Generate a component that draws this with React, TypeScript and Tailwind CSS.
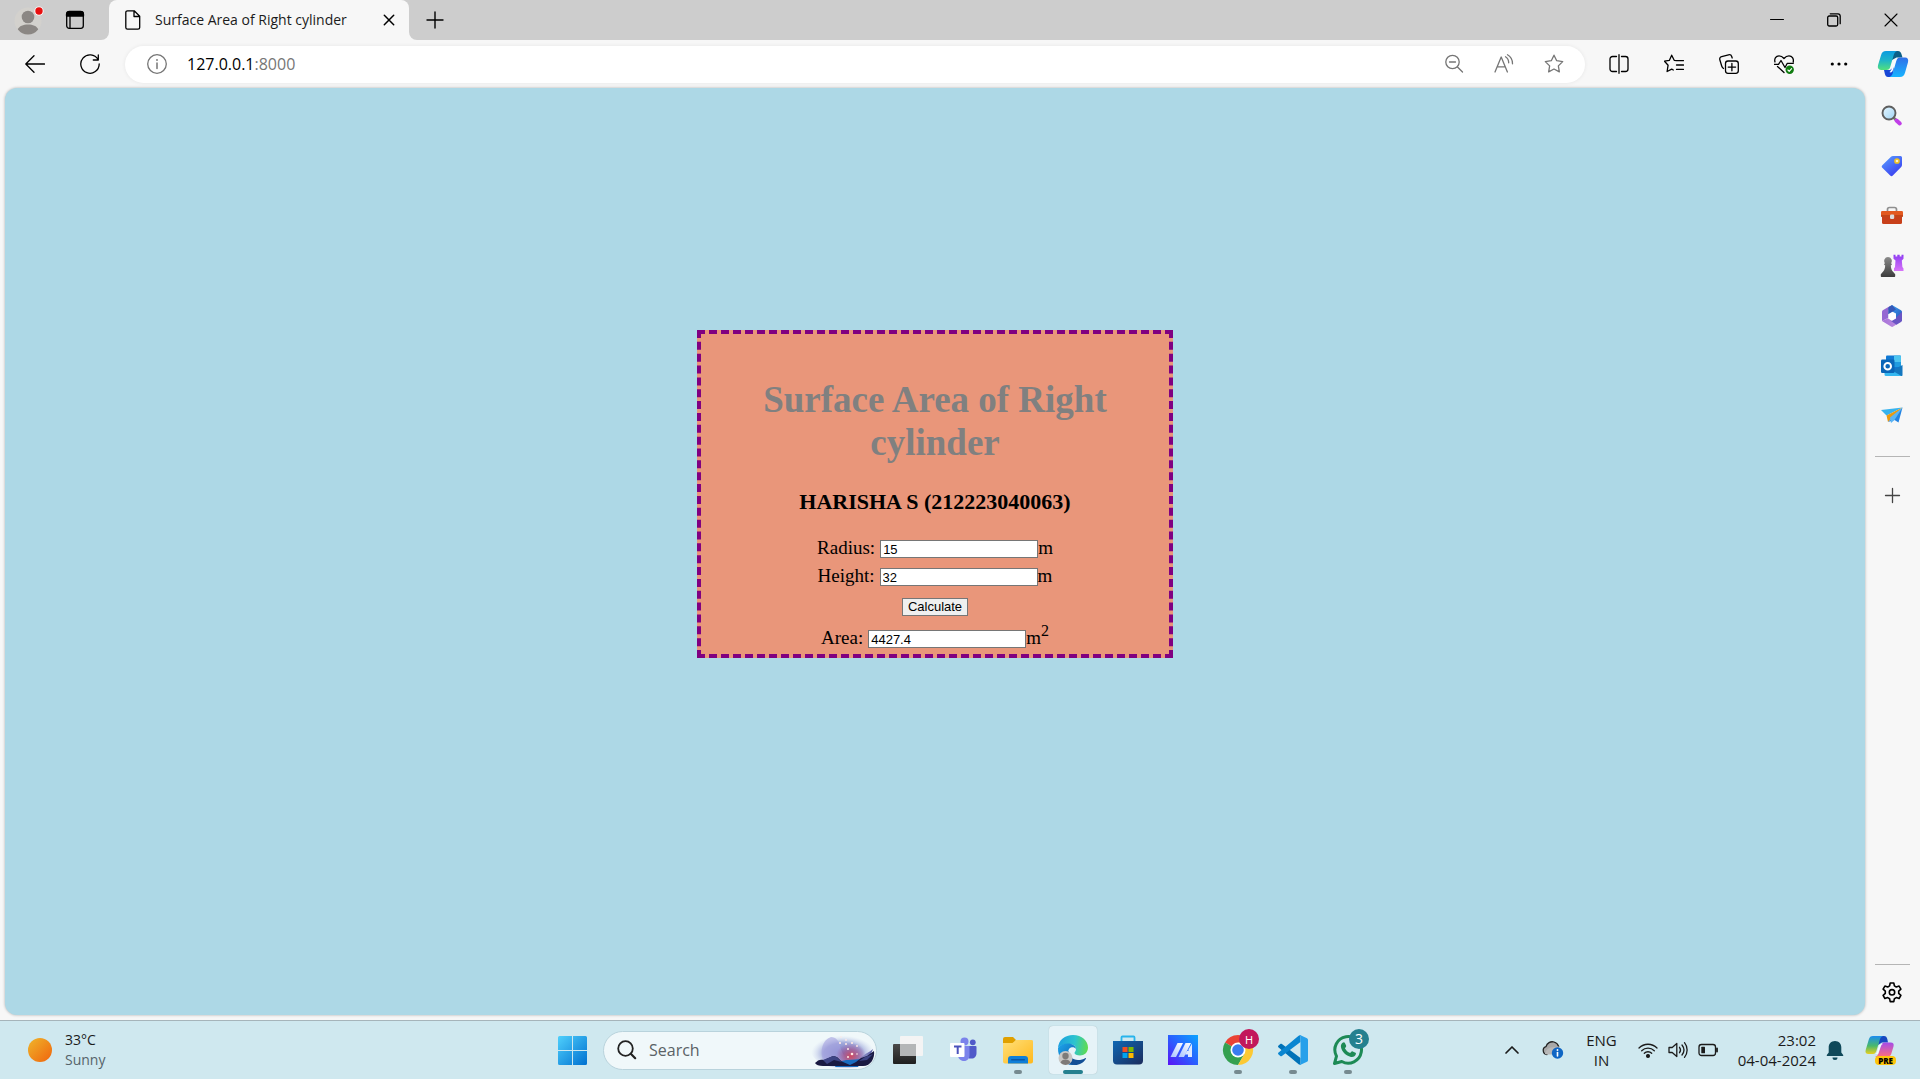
import React, { useState } from "react";

type IconProps = { children: React.ReactNode; size?: number; className?: string; box?: string };

function Svg({ children, size = 20, className = "", box }: IconProps) {
  return (
    <svg
      width={size}
      height={size}
      viewBox={box ?? `0 0 ${size} ${size}`}
      fill="none"
      stroke="currentColor"
      strokeWidth={1.3}
      strokeLinecap="round"
      strokeLinejoin="round"
      className={className}
      aria-hidden="true"
    >
      {children}
    </svg>
  );
}

function IconButton({ label, className = "", children }: { label: string; className?: string; children: React.ReactNode }) {
  return (
    <button type="button" aria-label={label} className={`flex shrink-0 items-center justify-center ${className}`}>
      {children}
    </button>
  );
}

function ProfileIcon() {
  return (
    <Svg size={34}>
      <g stroke="none">
        <circle cx="16" cy="18" r="13.5" fill="#d3d1cd" />
        <circle cx="16" cy="14" r="6.3" fill="#8b8784" />
        <path d="M5.8 26.5c1.400-3.600 5.400-5 10.200-5s8.800 1.400 10.200 5A13.500 13.500 0 0 1 16 31.500 13.500 13.500 0 0 1 5.800 26.500z" fill="#8b8784" />
        <circle cx="27" cy="8" r="4.600" fill="#fff" />
        <circle cx="27" cy="8" r="3.700" fill="#e81010" />
      </g>
    </Svg>
  );
}

function TitleBar() {
  return (
    <header className="flex h-10 bg-[#f7f7f7]">
      <div className="flex w-[109px] items-center rounded-br-lg bg-[#cdcdcd] pl-3">
        <IconButton label="Profile">
          <ProfileIcon />
        </IconButton>
        <IconButton label="Tab actions" className="ml-[19px]">
          <Svg size={20}>
            <rect x="1.700" y="1.700" width="16.600" height="16.600" rx="2.500" />
            <path d="M1.500 6V4.200A3 3 0 0 1 4.500 1.500h11a3 3 0 0 1 3 2.700V6z" fill="#000" />
            <path d="M5 6v12" />
          </Svg>
        </IconButton>
      </div>
      <div className="w-[300px] bg-[linear-gradient(#cdcdcd_50%,#f7f7f7_50%)]">
        <div className="flex h-10 items-center rounded-t-lg bg-[#f7f7f7] pl-[14px] pr-3">
          <Svg size={20}>
            <path d="M4.500.8h6.700l5.500 5.500v11.200a1.700 1.700 0 0 1-1.700 1.700H4.500a1.700 1.700 0 0 1-1.700-1.700v-15A1.700 1.700 0 0 1 4.500.8zM11 1v5.500h5.500" />
          </Svg>
          <span className="ml-3 flex-1 text-sm whitespace-nowrap text-[#1b1b1b]">Surface Area of Right cylinder</span>
          <IconButton label="Close tab">
            <Svg size={16}>
              <path d="M3.300 3.300l9.400 9.400M12.700 3.300l-9.400 9.400" strokeWidth={1.500} />
            </Svg>
          </IconButton>
        </div>
      </div>
      <div className="flex flex-1 items-center justify-between rounded-bl-lg bg-[#cdcdcd] pl-4">
        <IconButton label="New tab">
          <Svg size={20}>
            <path d="M10 2v16M2 10h16" strokeWidth={1.400} />
          </Svg>
        </IconButton>
        <div className="flex">
          <IconButton label="Minimize" className="w-[57px]">
            <Svg size={14}>
              <path d="M.5 6.500h13" strokeWidth={1} />
            </Svg>
          </IconButton>
          <IconButton label="Restore" className="w-[57px]">
            <Svg size={14}>
              <rect x=".7" y="3" width="10" height="10" rx="1.500" />
              <path d="M3.300.8H11A2.300 2.300 0 0 1 13.200 3v7.700" />
            </Svg>
          </IconButton>
          <IconButton label="Close window" className="w-[58px]">
            <Svg size={14}>
              <path d="M1 1l12 12M13 1L1 13" strokeWidth={1.100} />
            </Svg>
          </IconButton>
        </div>
      </div>
    </header>
  );
}

const STAR = "M10 1.200l2.700 5.500 6 .9-4.350 4.250 1 6L10 15l-5.350 2.850 1-6L1.300 7.600l6-.9z";

function CopilotIcon() {
  return (
    <Svg size={32}>
      <defs>
        <linearGradient id="cpA" x1="0" y1="0" x2="0" y2="1">
          <stop offset="0" stopColor="#0a9be0" />
          <stop offset=".5" stopColor="#1fb5c8" />
          <stop offset="1" stopColor="#52e07c" />
        </linearGradient>
        <linearGradient id="cpB" x1="0" y1="0" x2="0" y2="1">
          <stop offset="0" stopColor="#2f6fe8" />
          <stop offset="1" stopColor="#18b4ff" />
        </linearGradient>
      </defs>
      <g stroke="none">
        <path d="M15 3h6c2 0 3 1.200 3.600 3.500L25.500 9.500h-6L15 12z" fill="#0b5f88" />
        <path d="M16 29h-5c-1.600 0-2.600-1-3.100-3L7 22h6l4-3z" fill="#1746d6" />
        <path d="M9 3h11c-2 .7-2.800 2.300-3.500 4.700l-3.200 11c-.6 2.200-1.600 3.300-3.800 3.300H4c-2.600 0-3.700-2-3-4.700l3-10C4.900 4.300 6.300 3 9 3z" fill="url(#cpA)" />
        <path d="M23 29H12.500c2-.7 2.800-2.300 3.500-4.700l3.200-11c.6-2.200 1.600-3.800 3.800-3.800h5c2.600 0 3.700 2 3 4.700l-3 10.500C27.100 27.700 25.700 29 23 29z" fill="url(#cpB)" />
        <path d="M19.800 11.500c-1 1-1.500 2.500-2 4.500l-1.700 5.700c-.5 1.700-1.300 2.500-2.600 2.900l-1-.6c1.300-.7 1.900-2.300 2.400-4l1.500-5c.5-1.900 1.500-3.200 3.400-3.500z" fill="#f4fbff" />
      </g>
    </Svg>
  );
}

function Toolbar() {
  return (
    <nav aria-label="Browser toolbar" className="flex h-12 items-center pr-[11px] text-black">
      <IconButton label="Back" className="ml-[25px]">
        <Svg size={20}>
          <path d="M19.500 10H1M9 1.800L.8 10 9 18.200" />
        </Svg>
      </IconButton>
      <IconButton label="Reload" className="mr-[25px] ml-[35px]">
        <Svg size={20}>
          <path d="M18 5.500A9.200 9.200 0 1 0 19.200 10M18.300 1v5h-5" />
        </Svg>
      </IconButton>
      <div className="flex h-[37px] flex-1 items-center rounded-full bg-white pr-[21px] pl-[22px] text-[#757575] shadow-[0_0_4px_rgba(0,0,0,0.07)]">
        <IconButton label="Site information">
          <Svg size={20}>
            <circle cx="10" cy="10" r="9.300" />
            <path d="M10 9v5.500" strokeWidth={1.500} />
            <path d="M10 5.900v.2" strokeWidth={1.800} />
          </Svg>
        </IconButton>
        <a href="http://127.0.0.1:8000" className="ml-5 flex-1 text-base text-[#767676]">
          <span className="text-black">127.0.0.1</span>:8000
        </a>
        <IconButton label="Zoom out">
          <Svg size={20}>
            <circle cx="8.500" cy="8" r="6.700" />
            <path d="M13.500 13l5 5M5.500 8h6" />
          </Svg>
        </IconButton>
        <IconButton label="Read aloud" className="mx-[30px]">
          <Svg size={20}>
            <path d="M1 18L7.200 3l6.200 15M3.300 12.800h7.800M11.500 2.800c2 1.200 3.200 3.200 3.200 6M13.500.8c3.300 1.800 5 4.800 5 9" />
          </Svg>
        </IconButton>
        <IconButton label="Add to favorites">
          <Svg size={20}>
            <path d={STAR} />
          </Svg>
        </IconButton>
      </div>
      <div className="ml-6 flex items-center gap-[35px]">
        <IconButton label="Split screen">
          <Svg size={20}>
            <path d="M7.500 2.500h-4A2.500 2.500 0 0 0 1 5v10a2.500 2.500 0 0 0 2.500 2.500h4M12.500 2.500h4A2.500 2.500 0 0 1 19 5v10a2.500 2.500 0 0 1-2.500 2.500h-4M10 .7v18.600" />
          </Svg>
        </IconButton>
        <IconButton label="Favorites">
          <Svg size={20}>
            <path d="M12.500 6.600l-2.300-.3L7.700 1.200 5.300 6.400l-4.800.8 3.600 4-1 6.300 4.600-2.400 1.600.9M12.500 6.600h7M12.500 11h7M12.500 15.400h7" />
          </Svg>
        </IconButton>
        <IconButton label="Collections">
          <Svg size={20}>
            <rect x="6.500" y="7" width="12.800" height="12.300" rx="2.500" />
            <path d="M12.900 9.500v7.300M9.200 13.100h7.400M4.500 14.500C3.500 13.800 3 13 2.700 12L.9 6c-.5-1.700.2-3 1.800-3.400l6.800-1.800c1.600-.4 2.700.1 3.200 1.700l.5 1.500" />
          </Svg>
        </IconButton>
        <IconButton label="Browser essentials">
          <Svg size={20}>
            <path d="M1 8C0 4.500 2 1.800 5 1.800c2 0 3.600 1 5 2.700 1.400-1.700 3-2.700 5-2.700 3 0 5 2.700 4.200 6.200M.5 10.300h4L7 6.500l4 7 2.300-4.200h6M3.500 12.500l6.500 6" />
            <circle cx="15.700" cy="15.800" r="4.200" fill="#107c10" stroke="none" />
            <path d="M13.900 16l1.300 1.300 2.400-2.700" stroke="#fff" strokeWidth={1.100} />
          </Svg>
        </IconButton>
        <IconButton label="Settings and more">
          <Svg size={20}>
            <g fill="#000" stroke="none">
              <circle cx="3.300" cy="10" r="1.600" />
              <circle cx="10" cy="10" r="1.600" />
              <circle cx="16.700" cy="10" r="1.600" />
            </g>
          </Svg>
        </IconButton>
      </div>
      <IconButton label="Copilot" className="ml-7">
        <CopilotIcon />
      </IconButton>
    </nav>
  );
}

function NumberRow({ id, label, unit, value, onChange, readOnly }: { id: string; label: string; unit: React.ReactNode; value: string; onChange?: (v: string) => void; readOnly?: boolean }) {
  return (
    <div className="flex h-7 items-center justify-center text-[19px]">
      <label htmlFor={id} className="mr-[5px]">
        {label}
      </label>
      <input
        id={id}
        type="text"
        value={value}
        readOnly={readOnly}
        onChange={(e) => onChange?.(e.target.value)}
        className="mt-0.5 h-[18px] w-[158px] border border-[#767676] bg-white px-[2px] font-['Liberation_Sans',sans-serif] text-[13px] leading-4"
      />
      <span>{unit}</span>
    </div>
  );
}

function CylinderForm() {
  const [radius, setRadius] = useState("15");
  const [height, setHeight] = useState("32");
  const [area, setArea] = useState("4427.4");
  const calculate = () => {
    const r = Number(radius);
    const h = Number(height);
    setArea((2 * Math.PI * r * h + 2 * Math.PI * r * r).toFixed(1));
  };
  return (
    <form
      onSubmit={(e) => {
        e.preventDefault();
        calculate();
      }}
      className="w-[476px] border-4 border-dashed border-[purple] bg-[darksalmon] px-8 pt-11 pb-[2px] text-center font-['Liberation_Serif',serif] text-black"
    >
      <h1 className="text-[37px] leading-[43px] font-bold text-[gray]">Surface Area of Right cylinder</h1>
      <h3 className="mt-[25px] mb-5 text-[22px] leading-[25px] font-bold">HARISHA S (212223040063)</h3>
      <NumberRow id="radius" label="Radius:" unit="m" value={radius} onChange={setRadius} />
      <NumberRow id="height" label="Height:" unit="m" value={height} onChange={setHeight} />
      <div className="flex justify-center py-2">
        <button type="submit" className="h-[18px] border border-[#767676] bg-[#efefef] px-[5px] font-['Liberation_Sans',sans-serif] text-[13px] leading-4">
          Calculate
        </button>
      </div>
      <NumberRow
        id="area"
        label="Area:"
        unit={
          <>
            m<sup className="text-base">2</sup>
          </>
        }
        value={area}
        readOnly
      />
    </form>
  );
}

function SearchGlass() {
  return (
    <Svg size={24}>
      <defs>
        <linearGradient id="lens" x1="0" y1="0" x2="1" y2="1">
          <stop offset="0" stopColor="#e6f6ff" />
          <stop offset="1" stopColor="#9fd4f4" />
        </linearGradient>
      </defs>
      <path d="M13 13l3 3" stroke="#777" strokeWidth={2.500} />
      <path d="M16.500 16.500l3.300 3" stroke="#c13ee8" strokeWidth={4} />
      <circle cx="9" cy="9" r="6.500" fill="url(#lens)" stroke="#5e5e5e" strokeWidth={1.900} />
    </Svg>
  );
}

function TagIcon() {
  return (
    <Svg size={24}>
      <defs>
        <linearGradient id="tag" x1="0" y1="0" x2=".7" y2="1">
          <stop offset="0" stopColor="#5aa2ff" />
          <stop offset="1" stopColor="#3a3df0" />
        </linearGradient>
      </defs>
      <path d="M13 2h7.500A1.500 1.500 0 0 1 22 3.500V11c0 .8-.3 1.500-.8 2l-8.400 8.600c-.8.8-1.800.8-2.600 0L2.300 13.800c-.8-.8-.8-1.800 0-2.600L11 2.800c.5-.5 1.200-.8 2-.8z" fill="url(#tag)" stroke="none" />
      <circle cx="17" cy="7" r="2.100" fill="#fff2c8" stroke="#f2c21d" strokeWidth={1.500} />
    </Svg>
  );
}

function ToolboxIcon() {
  return (
    <Svg size={24}>
      <path d="M7.500 7V5.500A2 2 0 0 1 9.500 3.500h5a2 2 0 0 1 2 2V7" stroke="#8f8f8f" strokeWidth={1.700} />
      <g stroke="none">
        <path d="M2 10h20v8.500a1.500 1.500 0 0 1-1.500 1.500h-17A1.500 1.500 0 0 1 2 18.500z" fill="#c8401a" />
        <rect x="1" y="7" width="22" height="6" rx="1.200" fill="#e3591f" />
        <path d="M1 11.500h22v1H1z" fill="#a33312" />
        <rect x="10" y="10.500" width="4.200" height="4.500" rx="1.200" fill="#ddd" />
      </g>
    </Svg>
  );
}

function ChessIcon() {
  return (
    <Svg size={24}>
      <defs>
        <linearGradient id="rook" x1="0" y1="0" x2="0" y2="1">
          <stop offset="0" stopColor="#8f3df2" />
          <stop offset="1" stopColor="#d874f8" />
        </linearGradient>
        <linearGradient id="pawn" x1="0" y1="0" x2="0" y2="1">
          <stop offset="0" stopColor="#8b8b8b" />
          <stop offset="1" stopColor="#3c3c3c" />
        </linearGradient>
      </defs>
      <g stroke="none">
        <path d="M13.500.8h2v1.700h1.800V.8h2.400v1.700h1.800V.8H23.500v4l-1.700 1.700.6 6.500 1.100 1.500V17H14V14.500l1-1.500.5-6.500-2-1.700z" fill="url(#rook)" />
        <path d="M8 3a4 4 0 0 1 3.200 6.300l.8 1.200-1.200.9c.2 3.200 1 5.200 2.700 6.900l1.700 1.900V22c0 .6-.4 1-1 1H1.800c-.6 0-1-.4-1-1v-1.800l1.700-1.900c1.700-1.700 2.500-3.700 2.700-6.900L4 10.500l.8-1.200A4 4 0 0 1 8 3z" fill="url(#pawn)" />
      </g>
    </Svg>
  );
}

function OfficeIcon() {
  return (
    <Svg size={24}>
      <defs>
        <linearGradient id="m365a" x1="0" y1="0" x2="1" y2="1">
          <stop offset="0" stopColor="#3aa8f0" />
          <stop offset="1" stopColor="#2a55c0" />
        </linearGradient>
        <linearGradient id="m365b" x1="0" y1="0" x2="1" y2="0">
          <stop offset="0" stopColor="#a873d8" />
          <stop offset="1" stopColor="#b98ae0" />
        </linearGradient>
      </defs>
      <g stroke="none">
        <path d="M12 1l9 5.200c.6.300 1 .9 1 1.600V17l-6-3.300V9.500L8.200 5.500z" fill="url(#m365a)" />
        <path d="M10.500 1.800L2.800 6.200C2.200 6.600 2 7.100 2 7.800V17l6.200-3V5.500z" fill="#9467d2" />
        <path d="M12 1L9.500 2.400C8.600 3 8.200 3.800 8.200 5v9l3.800-2V8l4-2.500z" fill="#3558b8" />
        <path d="M2 17l9 5.600c.8.500 1.500.5 2.200 0L17 20.200l-8.800-6.200z" fill="url(#m365b)" />
        <path d="M22 7.800v8.400c0 .7-.3 1.400-1 1.800l-4.500 2.700L11 17l5-3.200z" fill="#6a55c4" />
        <path d="M12 8l4 2.300v4.200l-4 2.300-3.800-2.300v-4.200z" fill="#fff" />
      </g>
    </Svg>
  );
}

function OutlookIcon() {
  return (
    <Svg size={24}>
      <g stroke="none">
        <rect x="6" y="1.500" width="15" height="15" rx="1" fill="#0f78d4" />
        <path d="M14 1.500h6a1 1 0 0 1 1 1V8h-7z" fill="#4cc4ef" />
        <path d="M14 8h7v5h-7z" fill="#209be0" />
        <path d="M4.500 12L22 21V22H6a1.500 1.500 0 0 1-1.500-1.500z" fill="#35b8f1" />
        <path d="M22.500 11v10c0 .6-.4 1-1 1L12 16.500z" fill="#1477bf" />
        <rect x="1" y="5.500" width="13.500" height="13.500" rx="1.300" fill="#0a66b8" />
      </g>
      <circle cx="7.700" cy="12.200" r="3.300" stroke="#fff" strokeWidth={2} />
    </Svg>
  );
}

function DropIcon() {
  return (
    <Svg size={24}>
      <g stroke="none">
        <path d="M1 6l21.500-2.500L6.500 11.500z" fill="#37b3ee" />
        <path d="M6.500 11.500L22.500 3.500 8 18z" fill="#e99a12" />
        <path d="M8 18L22.500 3.500 18.500 18.500l-4-2.500z" fill="#2383e2" />
        <path d="M10 13.500L22.500 3.500l-8 12.500-3.500 3z" fill="#5ab5f5" />
      </g>
    </Svg>
  );
}

const SIDEBAR_APPS = [
  { name: "Search", icon: <SearchGlass /> },
  { name: "Shopping", icon: <TagIcon /> },
  { name: "Tools", icon: <ToolboxIcon /> },
  { name: "Games", icon: <ChessIcon /> },
  { name: "Microsoft 365", icon: <OfficeIcon /> },
  { name: "Outlook", icon: <OutlookIcon /> },
  { name: "Drop", icon: <DropIcon /> },
];

function Sidebar() {
  return (
    <aside className="flex w-[55px] flex-col items-center pr-px">
      <div className="flex flex-col gap-[26px] pt-4">
        {SIDEBAR_APPS.map((app) => (
          <IconButton key={app.name} label={app.name}>
            {app.icon}
          </IconButton>
        ))}
      </div>
      <hr className="mt-7 w-[35px] border-[#b5b5b5]" />
      <IconButton label="Customize" className="mt-[30px]">
        <Svg size={17}>
          <path d="M8.500 1.500v14M1.500 8.500h14" stroke="#444" />
        </Svg>
      </IconButton>
      <hr className="mt-auto w-[35px] border-[#b5b5b5]" />
      <IconButton label="Settings" className="mt-[17px] mb-[11px]">
        <Svg size={22}>
          <path
            d="M9.200 1h3.600l.6 2.900 1.900 1.100 2.800-.9 1.800 3.100-2.200 2v2.200l2.200 2-1.800 3.100-2.800-.9-1.900 1.100-.6 2.900H9.200l-.6-2.900-1.900-1.100-2.800.9-1.800-3.100 2.200-2V9.200l-2.200-2 1.800-3.100 2.800.9 1.900-1.100z"
            strokeWidth={1.600}
          />
          <circle cx="11" cy="10.300" r="2.700" strokeWidth={1.600} />
        </Svg>
      </IconButton>
    </aside>
  );
}

function StartIcon() {
  return (
    <Svg size={29}>
      <defs>
        <linearGradient id="win" x1="0" y1="0" x2="29" y2="29" gradientUnits="userSpaceOnUse">
          <stop offset="0" stopColor="#4fd0fc" />
          <stop offset="1" stopColor="#0070d0" />
        </linearGradient>
      </defs>
      <path d="M1.500 0H14v14H0V1.500A1.500 1.500 0 0 1 1.500 0zM15 0h12.500A1.500 1.500 0 0 1 29 1.500V14H15zM0 15h14v14H1.500A1.500 1.500 0 0 1 0 27.500zM15 15h14v12.500a1.500 1.500 0 0 1-1.500 1.500H15z" fill="url(#win)" stroke="none" />
    </Svg>
  );
}

function SearchArt() {
  return (
    <svg width="64" height="36" viewBox="0 0 64 36" aria-hidden="true" className="shrink-0">
      <defs>
        <radialGradient id="sky" cx=".5" cy=".6" r=".5">
          <stop offset="0" stopColor="#7476c6" />
          <stop offset=".6" stopColor="#8c95d2" stopOpacity=".8" />
          <stop offset="1" stopColor="#c9d2ee" stopOpacity="0" />
        </radialGradient>
        <radialGradient id="glow" cx=".5" cy=".5" r=".5">
          <stop offset="0" stopColor="#cf4a60" />
          <stop offset=".5" stopColor="#a8578c" stopOpacity=".7" />
          <stop offset="1" stopColor="#a060a0" stopOpacity="0" />
        </radialGradient>
        <linearGradient id="cliff" x1="0" y1="0" x2="1" y2="0">
          <stop offset="0" stopColor="#6a70b8" stopOpacity="0" />
          <stop offset="1" stopColor="#4a4d9c" />
        </linearGradient>
      </defs>
      <ellipse cx="32" cy="18" rx="32" ry="18" fill="url(#sky)" />
      <path d="M20 5c5 0 8 4 9 9s4 9 6 14H12c-3-9-1-20 8-23z" fill="#a5a2e0" opacity=".6" />
      <ellipse cx="40" cy="24" rx="15" ry="13" fill="url(#glow)" />
      <path d="M62 17c-3 3-7 4-10 7l-9 5h14z" fill="url(#cliff)" />
      <path d="M24 35c2-5 8-7 13-7l14-1-4 8z" fill="#1a6cc0" />
      <path d="M4 31c3-3 5-4 9-3l9-4c5 0 6 4 10 6l7 3 6-3 5-4 6-2 7-5c1 7-3 15-11 15H12c-4 0-7-1-8-3z" fill="#1a1a42" />
      <path d="M12 28l10-4c4 0 6 4 9 6l-8-2-7 4zM48 29l6-4 8-3-6 6z" fill="#3d4484" />
      <g fill="#ffe9e4">
        <circle cx="30" cy="5" r=".8" />
        <circle cx="35" cy="8" r=".9" />
        <circle cx="29" cy="11" r="1.100" />
        <circle cx="35" cy="12" r="1" />
        <circle cx="41" cy="11" r="1.100" />
        <circle cx="37" cy="17" r="1" />
        <circle cx="46" cy="14" r=".9" />
        <circle cx="41" cy="22" r="1.300" />
        <circle cx="37" cy="25" r="1" />
        <circle cx="46" cy="22" r=".8" />
      </g>
    </svg>
  );
}

function TaskViewIcon() {
  return (
    <Svg size={32}>
      <defs>
        <linearGradient id="tvd" x1="0" y1="0" x2="0" y2="1">
          <stop offset="0" stopColor="#4a4a4a" />
          <stop offset="1" stopColor="#1f1f1f" />
        </linearGradient>
      </defs>
      <g stroke="none">
        <rect x="1" y="10" width="23" height="20" rx="1" fill="url(#tvd)" />
        <rect x="8" y="2" width="23" height="20" rx="1" fill="#f4f4f4" />
        <path d="M8 10h16v12H9a1 1 0 0 1-1-1z" fill="#b4b6b7" />
      </g>
    </Svg>
  );
}

function TeamsIcon() {
  return (
    <Svg size={32} box="-1 0 32 32">
      <g stroke="none">
        <circle cx="24.800" cy="8.300" r="2.900" fill="#5059c9" />
        <path d="M21 12h6.500A1 1 0 0 1 28.500 13v6c0 3.500-2 5.500-5 5.500H21z" fill="#5059c9" />
        <circle cx="16.500" cy="7.500" r="4" fill="#7b83eb" />
        <path d="M10 12h11.500v9c0 3.500-2 6-5.500 6s-6-2.500-6-6z" fill="#7b83eb" />
        <rect x="2" y="9" width="14.500" height="14" rx="1" fill="#fff" />
        <path d="M6 12.500h7.500M9.700 12.500v7.500" stroke="#4b53bc" strokeWidth={2} strokeLinecap="butt" />
      </g>
    </Svg>
  );
}

function FolderIcon() {
  return (
    <Svg size={32}>
      <defs>
        <linearGradient id="fold" x1="0" y1="0" x2="1" y2="1">
          <stop offset="0" stopColor="#ffe07a" />
          <stop offset="1" stopColor="#ffb81c" />
        </linearGradient>
      </defs>
      <g stroke="none">
        <path d="M1 5a2 2 0 0 1 2-2h8l3 3-2.500 4H1z" fill="#e0a000" />
        <path d="M1 9h9.500L14 6h15.500A1.500 1.500 0 0 1 31 7.500v20a2 2 0 0 1-2 2H3a2 2 0 0 1-2-2z" fill="url(#fold)" />
        <path d="M6 29.500V25a3 3 0 0 1 3-3h14a3 3 0 0 1 3 3v4.500z" fill="#0f7fd8" />
        <rect x="9" y="25" width="14" height="1.500" rx=".7" fill="#0a57a5" />
      </g>
    </Svg>
  );
}

function EdgeIcon() {
  return (
    <Svg size={32}>
      <defs>
        <linearGradient id="edgeTop" x1="0" y1=".4" x2="1" y2=".5">
          <stop offset="0" stopColor="#1c9fe0" />
          <stop offset=".55" stopColor="#2cc4cf" />
          <stop offset="1" stopColor="#5fdc4e" />
        </linearGradient>
        <linearGradient id="edgeL" x1="0" y1="0" x2="1" y2="1">
          <stop offset="0" stopColor="#1da4ec" />
          <stop offset="1" stopColor="#0c59a4" />
        </linearGradient>
      </defs>
      <g stroke="none">
        <path d="M1 14C1.500 6 8 1 16 1c9 0 15 6 15 12.500 0 5-3.800 8-8 8-3 0-5.500-1-5.500-2.500 0-1 1.500-1.500 1.500-4 0-2.500-2.500-5-6.500-5C7 10 2.500 12 1 14z" fill="url(#edgeTop)" />
        <path d="M1 14c2-3 5.500-4.500 10-4.500 4.500 0 8 2.500 8 5.500-1-1.500-3-2-5-1.500-3 1-3.500 5-2 8.500 1.500 3.800 5 6.500 9 6.800C19 30.500 17.500 31 15.500 31 7 31 .5 23 1 14z" fill="url(#edgeL)" />
        <path d="M11.500 17c0 5 4 9 9.500 9 3 0 5.500-.8 7-1.800.7-.4 1.200.2.800.8C26.500 28.500 23 31 18 31c-6 0-9-5-9-9 0-2 1-4 2.500-5z" fill="#134f96" />
        <circle cx="8.500" cy="24" r="7" fill="#c8c6c4" />
        <circle cx="8.500" cy="22" r="3.200" fill="#7d7a78" />
        <path d="M3.500 28.800c.8-2.500 2.600-3.300 5-3.300s4.200.8 5 3.300a7 7 0 0 1-10 0z" fill="#7d7a78" />
      </g>
    </Svg>
  );
}

function StoreIcon() {
  return (
    <Svg size={32}>
      <defs>
        <linearGradient id="store" x1="0" y1="0" x2="1" y2="1">
          <stop offset="0" stopColor="#0f68b4" />
          <stop offset="1" stopColor="#1c2c5c" />
        </linearGradient>
      </defs>
      <path d="M9.500 8V3.500A1 1 0 0 1 10.500 2.500h11a1 1 0 0 1 1 1V8" stroke="#27b4ec" strokeWidth={1.800} />
      <g stroke="none">
        <path d="M1 7h30v19.500a4 4 0 0 1-4 4H5a4 4 0 0 1-4-4z" fill="url(#store)" />
        <path d="M10.500 13h5v5h-5z" fill="#f25022" />
        <path d="M16.500 13h5v5h-5z" fill="#7fba00" />
        <path d="M10.500 19h5v5h-5z" fill="#00a4ef" />
        <path d="M16.500 19h5v5h-5z" fill="#ffb900" />
      </g>
    </Svg>
  );
}

function AsusIcon() {
  return (
    <Svg size={30}>
      <defs>
        <linearGradient id="asus" x1="0" y1="1" x2="1" y2="0">
          <stop offset="0" stopColor="#5a12f5" />
          <stop offset=".5" stopColor="#2a60ff" />
          <stop offset="1" stopColor="#0aa4ff" />
        </linearGradient>
        <linearGradient id="asusBar" x1="1" y1="0" x2="0" y2="1">
          <stop offset="0" stopColor="#fff" />
          <stop offset="1" stopColor="#a9c2ff" />
        </linearGradient>
      </defs>
      <g stroke="none">
        <path d="M0 0h30v30H0z" fill="url(#asus)" />
        <path d="M2.500 22L9.500 8H15L8 22z" fill="url(#asusBar)" />
        <path d="M10.500 22L17.500 8H23l-7 14z" fill="url(#asusBar)" />
        <path d="M24 8.500V22h-4v-2.500h-3l2-3.500h1.500v-1.500z" fill="#dfe9ff" />
      </g>
    </Svg>
  );
}

function ChromeIcon() {
  return (
    <Svg size={32}>
      <g stroke="none">
        <path d="M16 16L3 8.500A15 15 0 0 1 29 8.500z" fill="#ea4335" />
        <path d="M16 16L3 8.500A15 15 0 0 0 16 31l6.500-11.300z" fill="#34a050" />
        <path d="M16 8.500h13A15 15 0 0 1 16 31l6.500-11.300z" fill="#fcc934" />
        <circle cx="16" cy="16" r="7.500" fill="#fff" />
        <circle cx="16" cy="16" r="5.800" fill="#3a7cf0" />
      </g>
    </Svg>
  );
}

function VsCodeIcon() {
  return (
    <Svg size={32}>
      <g stroke="none">
        <path d="M1.300 11.800l2-1.800c.5-.4 1-.4 1.600 0L23.500 24v6.800c-.9.100-1.600-.2-2.200-.8L1.300 13.300c-.4-.5-.4-1 0-1.500z" fill="#0072b8" />
        <path d="M1.300 20.200l2 1.800c.5.400 1 .4 1.600 0L23.500 8V1.200c-.9-.1-1.600.2-2.200.8L1.300 18.700c-.4.500-.4 1 0 1.500z" fill="#0a86d1" />
        <path d="M23 1l7 3.200c.6.300 1 .9 1 1.600v20.400c0 .7-.4 1.300-1 1.600L23 31c-.6.200-1.200 0-1.700-.5.900.5 2.200 0 2.200-1.300V2.800c0-1.300-1.300-1.800-2.200-1.300.5-.5 1.100-.7 1.700-.5z" fill="#27a0ea" />
      </g>
    </Svg>
  );
}

function WhatsAppIcon() {
  return (
    <Svg size={32}>
      <path d="M2.500 29.500l2-7.300A13.300 13.300 0 1 1 9.800 27.500z" stroke="#1d8a55" strokeWidth={3} />
      <path d="M10.600 8.800c.7-.8 1.700-.8 2.200 0l1.300 2.800c.2.500.1 1-.2 1.400l-1 1.200c1.200 2.300 2.900 3.900 5.200 4.900l1.300-1.400c.4-.4.8-.5 1.300-.3l2.800 1.400c.5.300.6.700.4 1.300-.6 2.300-2.700 3.400-5 2.900-5-1.200-9.300-5.200-10-10.200-.1-1.600.500-3 1.700-4z" fill="#1d8a55" stroke="none" />
    </Svg>
  );
}

function Badge({ text, className }: { text: string; className: string }) {
  return (
    <span className={`absolute top-[3px] right-[3px] flex size-5 items-center justify-center rounded-full leading-none text-white ${className}`}>{text}</span>
  );
}

type TaskApp = { name: string; icon: React.ReactNode; running?: boolean; active?: boolean; badge?: React.ReactNode };

const TASK_APPS: TaskApp[] = [
  { name: "Task view", icon: <TaskViewIcon /> },
  { name: "Microsoft Teams", icon: <TeamsIcon /> },
  { name: "File Explorer", icon: <FolderIcon />, running: true },
  { name: "Microsoft Edge", icon: <EdgeIcon />, active: true },
  { name: "Microsoft Store", icon: <StoreIcon /> },
  { name: "MyASUS", icon: <AsusIcon /> },
  { name: "Google Chrome", icon: <ChromeIcon />, running: true, badge: <Badge text="H" className="bg-[#c2185b] text-[11px]" /> },
  { name: "Visual Studio Code", icon: <VsCodeIcon />, running: true },
  { name: "WhatsApp", icon: <WhatsAppIcon />, running: true, badge: <Badge text="3" className="bg-[#24808f] text-sm" /> },
];

function TaskButton({ app }: { app: TaskApp }) {
  return (
    <button
      type="button"
      aria-label={app.name}
      className={`relative flex size-12 shrink-0 items-center justify-center rounded ${app.active ? "bg-[#e6f3f8] shadow-[0_0_1px_rgba(0,0,0,0.25)]" : ""}`}
    >
      {app.icon}
      {app.badge}
      {app.running && <span className="absolute bottom-0 h-1 w-2 rounded-full bg-[#768a90]" />}
      {app.active && <span className="absolute bottom-0 h-1 w-5 rounded-full bg-[#24808f]" />}
    </button>
  );
}

function PreviewCopilotIcon() {
  return (
    <svg width="30" height="30" viewBox="0 0 30 30" aria-hidden="true">
      <defs>
        <linearGradient id="pcA" x1="0" y1="0" x2="0" y2="1">
          <stop offset="0" stopColor="#1b8cf0" />
          <stop offset=".55" stopColor="#49b96a" />
          <stop offset="1" stopColor="#e8d020" />
        </linearGradient>
        <linearGradient id="pcB" x1="0" y1="0" x2="0" y2="1">
          <stop offset="0" stopColor="#a44be8" />
          <stop offset="1" stopColor="#ff6f7c" />
        </linearGradient>
      </defs>
      <path d="M14 1h5c2 0 2.700 1 3.300 3L23 7.500h-6L13 10z" fill="#1648c0" />
      <path d="M8 1h10c-2 .8-2.700 2-3.300 4l-3 10c-.6 2-1.500 4-3.700 4H3.500C1 19 0 17.500.7 15L3.800 4.500C4.500 2 5.700 1 8 1z" fill="url(#pcA)" />
      <path d="M20 22H10c2-1 3-2 3.700-4L16 11c.7-2.300 1.600-3.500 3.700-3.500h6c2.500 0 3.500 1.500 2.800 4l-2.200 7.300C25.600 21 24 22 20 22z" fill="url(#pcB)" />
      <path d="M18 9c-1.500.6-2.300 1.700-2.900 3.500L13 19h-2.500c1.200-.7 1.600-2 2-3.500l1.200-4C14.300 9.700 15.500 9 18 9z" fill="#f4fbff" />
    </svg>
  );
}

function Taskbar() {
  return (
    <footer className="grid min-h-[59px] grid-cols-[1fr_auto_1fr] items-center border-t border-[#a6b4ba] bg-[#cfe8ef]">
      <button type="button" className="flex items-center gap-[13px] pl-7 text-left text-sm leading-5">
        <span className="size-6 rounded-full bg-[linear-gradient(135deg,#efb62c,#f0640c)]" />
        <span>
          <span className="block text-[#1b1b1b]">33°C</span>
          <span className="block text-[#56646a]">Sunny</span>
        </span>
      </button>

      <div className="flex items-center gap-[7px]">
        <IconButton label="Start" className="size-12">
          <StartIcon />
        </IconButton>
        <div className="flex h-[39px] w-[274px] items-center rounded-full border border-[#b9d3dc] bg-[#f0f8fa] pr-px pl-[13px]">
          <Svg size={20} className="shrink-0 text-[#222]">
            <circle cx="8.500" cy="8.500" r="7.300" strokeWidth={1.800} />
            <path d="M13.800 13.800l4.400 4.400" strokeWidth={2.200} />
          </Svg>
          <input type="search" aria-label="Search" placeholder="Search" className="ml-3 w-0 flex-1 bg-transparent text-base outline-none placeholder:text-[#5a6266]" />
          <SearchArt />
        </div>
        {TASK_APPS.map((app) => (
          <TaskButton key={app.name} app={app} />
        ))}
      </div>

      <div className="flex items-center justify-end pr-[25px] text-[15px] leading-5 text-[#1b1b1b]">
        <IconButton label="Show hidden icons">
          <Svg size={16}>
            <path d="M2 11l6-6 6 6" strokeWidth={1.700} />
          </Svg>
        </IconButton>
        <IconButton label="OneDrive" className="ml-[22px]">
          <Svg size={22}>
            <path d="M5 15.500a4 4 0 0 1-1-7.800C5 4 8.500 2 12 3c2.500.7 4 2.300 4.700 4.500" stroke="#222" fill="#a8a8a8" />
            <path d="M3 15c0-3 3-6 6-6.500l8-1v8H5z" fill="#b8b8b8" stroke="none" />
            <circle cx="15.500" cy="14" r="5.700" fill="#0f66c4" stroke="none" />
            <path d="M15.500 13.500v3.500" stroke="#fff" strokeWidth={1.600} />
            <path d="M15.500 11v.1" stroke="#fff" strokeWidth={1.900} />
          </Svg>
        </IconButton>
        <button type="button" className="ml-[22px] text-center">
          <span className="block">ENG</span>
          <span className="block">IN</span>
        </button>
        <button type="button" aria-label="Network, volume, battery" className="ml-[21px] flex items-center gap-[10px]">
          <Svg size={20}>
            <path d="M1 8a12.700 12.700 0 0 1 18 0M3.700 10.700a9 9 0 0 1 12.600 0M6.300 13.300a5.200 5.200 0 0 1 7.400 0" />
            <circle cx="10" cy="16" r="1.400" fill="currentColor" />
          </Svg>
          <Svg size={20}>
            <path d="M1 7.500h3.200L8.800 3.500v13l-4.600-4H1zM11.500 7.300c1.200 1.600 1.200 3.800 0 5.400M14 5c2.400 3 2.400 7 0 10M16.500 2.700c3.500 4.300 3.500 10.300 0 14.600" />
          </Svg>
          <Svg size={20}>
            <rect x="1" y="4.500" width="16.500" height="11" rx="2.500" />
            <rect x="3.300" y="6.800" width="3.700" height="6.400" rx=".5" fill="currentColor" stroke="none" />
            <path d="M19 8.500v3" strokeWidth={1.800} />
          </Svg>
        </button>
        <button type="button" className="ml-5 text-right">
          <span className="block">23:02</span>
          <span className="block">04-04-2024</span>
        </button>
        <IconButton label="Notifications" className="ml-[9px]">
          <Svg size={20}>
            <path d="M10 1c3.800 0 6.300 2.800 6.300 6.300v5.200l1.900 2.500v1H1.800v-1l1.900-2.500V7.300C3.700 3.800 6.200 1 10 1zM7.500 17.500h5a2.500 2.500 0 0 1-5 0z" fill="#10495a" stroke="none" />
          </Svg>
        </IconButton>
        <button type="button" aria-label="Copilot preview" className="relative ml-5">
          <PreviewCopilotIcon />
          <span className="absolute -right-px bottom-0 rounded-sm bg-[#fdc50c] px-[3px] text-[8px] leading-[9px] font-extrabold text-black">PRE</span>
        </button>
      </div>
    </footer>
  );
}

export default function App() {
  return (
    <div className="flex min-h-screen flex-col bg-[#f7f7f7] font-['Open_Sans','Noto_Sans',sans-serif]">
      <TitleBar />
      <Toolbar />
      <div className="flex flex-1 pb-[5px] pl-[5px]">
        <main className="flex flex-1 items-start justify-center rounded-xl bg-[#add8e6] pt-[242px] pb-10 shadow-[0_0_3px_rgba(0,0,0,0.3)]">
          <CylinderForm />
        </main>
        <Sidebar />
      </div>
      <Taskbar />
    </div>
  );
}
